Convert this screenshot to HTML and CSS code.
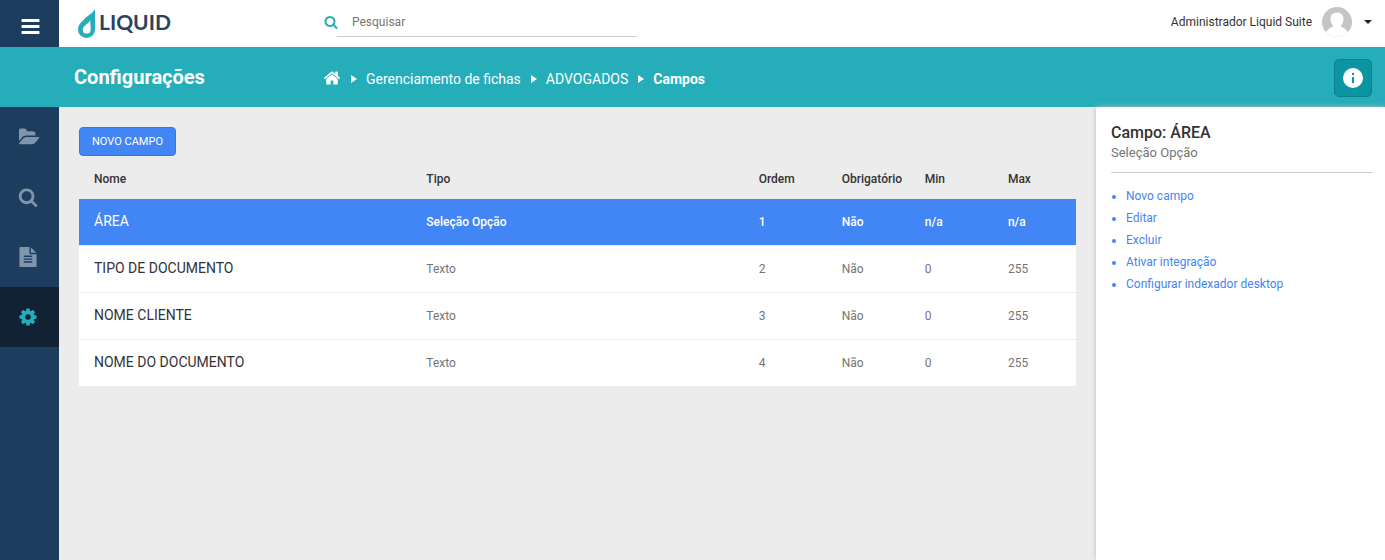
FILE: index.html
```html
<!DOCTYPE html>
<html lang="pt-BR">
<head>
<meta charset="utf-8">
<meta name="viewport" content="width=device-width, initial-scale=1">
<title>Liquid - Configurações</title>
<link rel="stylesheet" href="styles.css">
</head>
<body>
<div class="app">
  <header class="topbar">
    <button class="menu-toggle" type="button" aria-label="Menu">
      <svg class="icon-menu" viewBox="0 0 1792 1792" aria-hidden="true"><path d="M1664 1344v128q0 26-19 45t-45 19h-1408q-26 0-45-19t-19-45v-128q0-26 19-45t45-19h1408q26 0 45 19t19 45zm0-512v128q0 26-19 45t-45 19h-1408q-26 0-45-19t-19-45v-128q0-26 19-45t45-19h1408q26 0 45 19t19 45zm0-512v128q0 26-19 45t-45 19h-1408q-26 0-45-19t-19-45v-128q0-26 19-45t45-19h1408q26 0 45 19t19 45z"/></svg>
    </button>
    <a class="logo" href="#">
      <svg class="logo-mark" viewBox="0 0 17 29" aria-hidden="true"><path fill-rule="evenodd" d="M17 0V20.500A8.500 8.500 0 0 1 0 20.500C0 18 1 16 2.500 14L8.500 8C11.500 5.500 15 3.500 17 0ZM12.300 11.500C10.500 14.500 4.800 17 4.800 20.700A3.900 3.900 0 0 0 12.600 20.700Z"/></svg>
      <span class="logo-text">LIQUID</span>
    </a>
    <form class="search" role="search">
      <label class="search-label" for="q" aria-label="Pesquisar">
        <svg class="icon-search" viewBox="0 0 1792 1792" aria-hidden="true"><path d="M1216 832q0-185-131.500-316.500t-316.500-131.500-316.500 131.500-131.500 316.500 131.500 316.500 316.500 131.500 316.500-131.500 131.500-316.500zm512 832q0 52-38 90t-90 38q-54 0-90-38l-343-342q-179 124-399 124-143 0-273.500-55.500t-225-150-150-225-55.500-273.500 55.500-273.500 150-225 225-150 273.500-55.500 273.500 55.500 225 150 150 225 55.500 273.500q0 220-124 399l343 343q37 37 37 90z"/></svg>
      </label>
      <input class="search-input" id="q" type="text" placeholder="Pesquisar">
    </form>
    <button class="user" type="button">
      <span>Administrador Liquid Suite</span>
      <svg class="avatar" viewBox="0 0 30 30" aria-hidden="true"><defs><clipPath id="face"><circle cx="15" cy="15" r="15"/></clipPath></defs><g clip-path="url(#face)"><rect width="30" height="30" fill="#c5c5c5"/><path fill="#fff" d="M15 5.500C19.500 5.500 21.500 8.500 21.500 12C21.500 15 20.500 17 19 18.500C19 21 25.500 20 27.500 30H2.500C4.500 20 11 21 11 18.500C9.500 17 8.500 15 8.500 12C8.500 8.500 10.500 5.500 15 5.500Z"/></g></svg>
      <span class="caret"></span>
    </button>
  </header>

  <div class="titlebar">
    <h1 class="title">Configurações</h1>
    <nav class="crumbs" aria-label="Localização">
      <a class="crumb" href="#" aria-label="Início"><svg class="icon-home" viewBox="0 0 1792 1792" aria-hidden="true"><path d="M1472 992v480q0 26-19 45t-45 19h-384v-384h-256v384h-384q-26 0-45-19t-19-45v-480q0-1 .5-3t.5-3l575-474 575 474q1 2 1 6zm223-69l-62 74q-8 9-21 11h-3q-13 0-21-7l-692-577-692 577q-12 8-24 7-13-2-21-11l-62-74q-8-10-7-23.500t11-21.500l719-599q32-26 76-26t76 26l244 204v-195q0-14 9-23t23-9h192q14 0 23 9t9 23v408l219 182q10 8 11 21.500t-7 23.500z"/></svg></a>
      <span class="crumb-sep"></span>
      <a class="crumb" href="#">Gerenciamento de fichas</a>
      <span class="crumb-sep"></span>
      <a class="crumb" href="#">ADVOGADOS</a>
      <span class="crumb-sep"></span>
      <span class="crumb crumb-current">Campos</span>
    </nav>
    <button class="info" type="button" aria-label="Informações">
      <svg class="icon-info" viewBox="0 0 20 20" aria-hidden="true"><path fill-rule="evenodd" d="M10 0A10 10 0 1 0 10 20A10 10 0 0 0 10 0ZM9 5H11V7H9ZM9 9H11V15H9Z"/></svg>
    </button>
  </div>

  <div class="body">
    <nav class="sidebar" aria-label="Principal">
      <a class="side-item" href="#" aria-label="Pastas"><svg class="icon-side icon-folder" viewBox="0 0 1879 1792" aria-hidden="true"><path d="M1815 952q0 31-31 66l-336 396q-43 51-120.500 86.500t-143.500 35.500h-1088q-34 0-60.500-13t-26.500-43q0-31 31-66l336-396q43-51 120.500-86.500t143.500-35.500h1088q34 0 60.500 13t26.500 43zm-343-344v160h-832q-94 0-197 47.500t-164 119.500l-337 396-5 6q0-4-.5-12.500t-.5-12.500v-960q0-92 66-158t158-66h320q92 0 158 66t66 158v32h544q92 0 158 66t66 158z"/></svg></a>
      <a class="side-item" href="#" aria-label="Pesquisa"><svg class="icon-side" viewBox="0 0 1792 1792" aria-hidden="true"><path d="M1216 832q0-185-131.500-316.500t-316.500-131.500-316.500 131.500-131.500 316.500 131.500 316.500 316.500 131.500 316.500-131.500 131.500-316.500zm512 832q0 52-38 90t-90 38q-54 0-90-38l-343-342q-179 124-399 124-143 0-273.500-55.500t-225-150-150-225-55.500-273.500 55.500-273.500 150-225 225-150 273.500-55.500 273.500 55.500 225 150 150 225 55.500 273.500q0 220-124 399l343 343q37 37 37 90z"/></svg></a>
      <a class="side-item" href="#" aria-label="Relatórios"><svg class="icon-side" viewBox="0 0 1792 1792" aria-hidden="true"><path d="M1596 476q14 14 28 36h-472v-472q22 14 36 28zm-476 164h544v1056q0 40-28 68t-68 28h-1344q-40 0-68-28t-28-68v-1600q0-40 28-68t68-28h800v544q0 40 28 68t68 28zm160 736v-64q0-14-9-23t-23-9h-704q-14 0-23 9t-9 23v64q0 14 9 23t23 9h704q14 0 23-9t9-23zm0-256v-64q0-14-9-23t-23-9h-704q-14 0-23 9t-9 23v64q0 14 9 23t23 9h704q14 0 23-9t9-23zm0-256v-64q0-14-9-23t-23-9h-704q-14 0-23 9t-9 23v64q0 14 9 23t23 9h704q14 0 23-9t9-23z"/></svg></a>
      <a class="side-item side-item-active" href="#" aria-label="Configurações"><svg class="icon-side" viewBox="0 0 1792 1792" aria-hidden="true"><path d="M1152 896q0-106-75-181t-181-75-181 75-75 181 75 181 181 75 181-75 75-181zm512-109v222q0 12-8 23t-20 13l-185 28q-19 54-39 91 35 50 107 138 10 12 10 25t-9 23q-27 37-99 108t-94 71q-12 0-26-9l-138-108q-44 23-91 38-16 136-29 186-7 28-36 28h-222q-14 0-24.500-8.500t-11.500-21.500l-28-184q-49-16-90-37l-141 107q-10 9-25 9-14 0-25-11-126-114-165-168-7-10-7-23 0-12 8-23 15-21 51-66.500t54-70.500q-27-50-41-99l-183-27q-13-2-21-12.500t-8-23.500v-222q0-12 8-23t19-13l186-28q14-46 39-92-40-57-107-138-10-12-10-24 0-10 9-23 26-36 98.500-107.500t94.500-71.500q13 0 26 10l138 107q44-23 91-38 16-136 29-186 7-28 36-28h222q14 0 24.500 8.500t11.500 21.500l28 184q49 16 90 37l142-107q9-9 24-9 13 0 25 10 129 119 165 170 7 8 7 22 0 12-8 23-15 21-51 66.500t-54 70.500q26 50 41 98l183 28q13 2 21 12.500t8 23.500z"/></svg></a>
    </nav>

    <main class="content">
      <button class="btn-new" type="button">NOVO CAMPO</button>
      <table class="fields">
        <colgroup><col class="col-wide"><col class="col-wide"><col><col><col><col></colgroup>
        <thead>
          <tr><th scope="col">Nome</th><th scope="col">Tipo</th><th scope="col">Ordem</th><th scope="col">Obrigatório</th><th scope="col">Min</th><th scope="col">Max</th></tr>
        </thead>
        <tbody>
          <tr class="selected"><td class="name">ÁREA</td><td>Seleção Opção</td><td>1</td><td>Não</td><td>n/a</td><td>n/a</td></tr>
          <tr><td class="name">TIPO DE DOCUMENTO</td><td>Texto</td><td>2</td><td>Não</td><td>0</td><td>255</td></tr>
          <tr><td class="name">NOME CLIENTE</td><td>Texto</td><td>3</td><td>Não</td><td>0</td><td>255</td></tr>
          <tr><td class="name">NOME DO DOCUMENTO</td><td>Texto</td><td>4</td><td>Não</td><td>0</td><td>255</td></tr>
        </tbody>
      </table>
    </main>

    <aside class="panel">
      <div class="panel-head">
        <h2 class="panel-title">Campo: ÁREA</h2>
        <p class="panel-sub">Seleção Opção</p>
      </div>
      <ul class="actions">
        <li><a href="#">Novo campo</a></li>
        <li><a href="#">Editar</a></li>
        <li><a href="#">Excluir</a></li>
        <li><a href="#">Ativar integração</a></li>
        <li><a href="#">Configurar indexador desktop</a></li>
      </ul>
    </aside>
  </div>
</div>
</body>
</html>
```
FILE: styles.css
```css
* { box-sizing: border-box; }

body {
  margin: 0;
  font-family: Roboto, sans-serif;
  font-size: 12px;
  line-height: 16px;
  color: #333;
  background: #ececec;
}

button, input { font: inherit; }
button { cursor: pointer; }
a { color: inherit; text-decoration: none; }
svg { display: block; flex: none; fill: currentColor; }

.app {
  display: flex;
  flex-direction: column;
  min-height: 100vh;
}

/* Top bar */
.topbar {
  display: flex;
  align-items: center;
  height: 47px;
  background: #fff;
}
.menu-toggle {
  display: flex;
  align-items: center;
  justify-content: center;
  align-self: stretch;
  width: 59px;
  padding: 6px 0 0 2px;
  border: 0;
  color: #fff;
  background: #1c3d5e;
}
.icon-menu { width: 21px; height: 21px; }
.logo {
  display: flex;
  align-items: center;
  gap: 4px;
  width: 246px;
  padding-left: 19px;
}
.logo-mark { width: 17px; height: 29px; color: #25adba; }
.logo-text {
  padding-bottom: 4px;
  font-family: Lato, sans-serif;
  font-size: 21px;
  line-height: 28px;
  font-weight: 700;
  color: #2c435d;
}
.search {
  display: flex;
  align-items: center;
  padding: 0 0 4px 19px;
}
.search-label { color: #25adba; }
.icon-search { width: 14px; height: 14px; }
.search-input {
  width: 300px;
  height: 30px;
  padding: 1px 15px 0;
  margin-left: -1px;
  border: 0;
  border-bottom: 1px solid #ccc;
  color: #333;
  background: none;
}
.search-input::placeholder { color: #757575; opacity: 1; }
.user {
  display: flex;
  align-items: center;
  gap: 10px;
  margin-left: auto;
  padding: 0 13px 4px 0;
  border: 0;
  color: #333;
  background: none;
}
.avatar { width: 30px; height: 30px; }
.caret {
  margin-left: 2px;
  border: 4px solid transparent;
  border-top-color: #222;
  border-bottom: 0;
}

/* Title bar */
.titlebar {
  display: flex;
  align-items: center;
  height: 60px;
  padding: 2px 13px 0 74px;
  color: #fff;
  background: #25adba;
}
.title {
  width: 249px;
  margin: 0;
  padding-bottom: 2px;
  font-size: 20px;
  line-height: 24px;
  font-weight: 700;
}
.crumbs {
  display: flex;
  align-items: center;
  padding-top: 2px;
  font-size: 14px;
  line-height: 20px;
}
.crumb-sep {
  margin: 0 9px 0 10px;
  border: 4px solid transparent;
  border-left: 6px solid #fff;
  border-right: 0;
}
.crumb-current { font-weight: 700; }
.icon-home { width: 18px; height: 18px; margin-bottom: 2px; }
.info {
  display: flex;
  align-items: center;
  justify-content: center;
  width: 38px;
  height: 38px;
  margin-left: auto;
  padding: 0;
  border: 1px solid #09808b;
  border-radius: 5px;
  color: #fff;
  background: #0b95a2;
}
.icon-info { width: 20px; height: 20px; }

/* Body */
.body {
  display: flex;
  flex: 1;
}
.sidebar {
  flex: none;
  width: 59px;
  background: #1c3d5e;
}
.side-item {
  display: flex;
  align-items: center;
  justify-content: center;
  height: 60px;
  padding-right: 3px;
  color: #7f95a9;
}
.side-item-active { color: #25adba; background: #102233; }
.icon-side { width: 20px; height: 20px; }
.icon-folder { width: 21px; margin-left: 3px; }

.content {
  flex: 1;
  min-width: 0;
  padding: 20px;
}
.btn-new {
  display: block;
  padding: 6px 12px;
  border: 1px solid #3b74d7;
  border-radius: 4px;
  font-size: 11px;
  line-height: 15px;
  color: #fff;
  background: #4285f4;
}

.fields {
  width: 100%;
  table-layout: fixed;
  border-collapse: separate;
  border-spacing: 0;
}
.col-wide { width: 33.333%; }
.fields th {
  height: 43px;
  padding: 3px 0 0 15px;
  font-weight: 500;
  text-align: left;
}
.fields td {
  height: 47px;
  padding: 0 0 0 15px;
  border-bottom: 1px solid #ececec;
  color: #757575;
  background: #fff;
}
.fields .name { padding-bottom: 2px; font-size: 14px; color: #333; }
.fields .selected td {
  color: #fff;
  background: #4285f4;
  font-weight: 500;
}
.fields .selected .name { font-weight: 400; }

/* Detail panel */
.panel {
  flex: none;
  width: 289px;
  padding: 15px 13px 15px 15px;
  background: #fff;
  box-shadow: 0 0 5px #bbb;
}
.panel-head {
  padding-bottom: 10px;
  border-bottom: 1px solid #ccc;
}
.panel-title {
  margin: 0;
  font-size: 16px;
  line-height: 22px;
  font-weight: 500;
}
.panel-sub {
  margin: 0;
  font-size: 13px;
  line-height: 18px;
  color: #757575;
}
.actions {
  margin: 12px 0 0;
  padding-left: 15px;
  line-height: 22px;
  color: #4285f4;
}
```
